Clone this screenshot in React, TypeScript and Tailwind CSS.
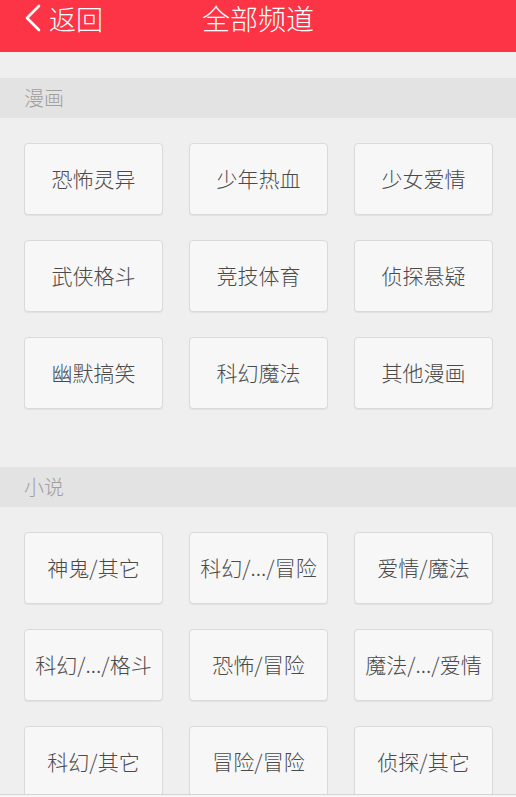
import React from "react";

const sections = [
  {
    title: "漫画",
    items: [
      "恐怖灵异",
      "少年热血",
      "少女爱情",
      "武侠格斗",
      "竞技体育",
      "侦探悬疑",
      "幽默搞笑",
      "科幻魔法",
      "其他漫画",
    ],
  },
  {
    title: "小说",
    items: [
      "神鬼/其它",
      "科幻/.../冒险",
      "爱情/魔法",
      "科幻/.../格斗",
      "恐怖/冒险",
      "魔法/.../爱情",
      "科幻/其它",
      "冒险/冒险",
      "侦探/其它",
    ],
  },
];

const App: React.FC = () => {
  return (
    <div
      className="flex h-[797px] w-[516px] flex-col overflow-hidden bg-[#efefef]"
      style={{ fontFamily: '"Noto Sans CJK SC", "Noto Sans", sans-serif' }}
    >
      <header className="grid h-[52px] shrink-0 grid-cols-[1fr_auto_1fr] items-center bg-[#fd3446] pb-[16px] text-white">
        <div className="flex items-center gap-[7px] pl-[24px]">
          <svg width="18" height="28" viewBox="0 0 18 28" fill="none">
            <polyline
              points="15,2 3,14 15,26"
              stroke="white"
              strokeWidth="2.6"
              strokeLinecap="round"
              strokeLinejoin="round"
            />
          </svg>
          <span className="text-[27px] font-light leading-none">返回</span>
        </div>
        <h1 className="text-[28px] font-light leading-none">全部频道</h1>
        <div />
      </header>

      <div className="flex-1 overflow-hidden pt-[26px]">
        {sections.map((s, i) => (
          <section key={s.title} className={i === 0 ? "pb-[58px]" : ""}>
            <div className="flex h-[40px] items-center bg-[#e3e3e3] px-[24px] text-[20px] font-light text-[#a0a0a0]">
              {s.title}
            </div>
            <div className="grid grid-cols-3 gap-x-[26px] gap-y-[25px] pl-[24px] pr-[23px] pt-[25px]">
              {s.items.map((item) => (
                <button
                  key={item}
                  className="flex h-[72px] items-center justify-center whitespace-nowrap rounded-[4px] border border-[#dadada] bg-[#f7f7f7] text-[21px] font-light text-[#4a4a4a] shadow-[0_1px_1px_rgba(0,0,0,0.06)]"
                >
                  {item}
                </button>
              ))}
            </div>
          </section>
        ))}
      </div>

      <div className="h-[3px] shrink-0 border-t border-[#d4d4d4] bg-[#f6f6f6]" />
    </div>
  );
};

export default App;
